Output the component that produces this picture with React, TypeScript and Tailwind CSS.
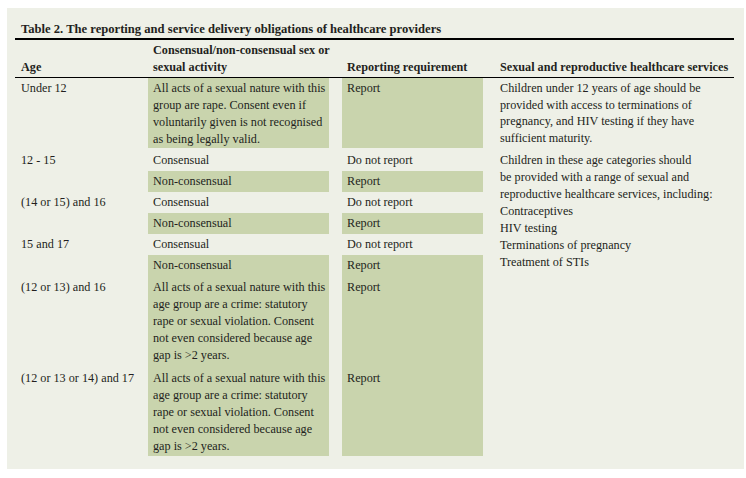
import React from 'react';

type Row = {
  age: string;
  activity: string[];
  report: string;
  green: boolean;
  multi?: boolean;
};

const CRIME = [
  'All acts of a sexual nature with this',
  'age group are a crime: statutory',
  'rape or sexual violation. Consent',
  'not even considered because age',
  'gap is >2 years.',
];

// rows after "Under 12"; the services column spans all of them
const rows: Row[] = [
  { age: '12 - 15', activity: ['Consensual'], report: 'Do not report', green: false },
  { age: '', activity: ['Non-consensual'], report: 'Report', green: true },
  { age: '(14 or 15) and 16', activity: ['Consensual'], report: 'Do not report', green: false },
  { age: '', activity: ['Non-consensual'], report: 'Report', green: true },
  { age: '15 and 17', activity: ['Consensual'], report: 'Do not report', green: false },
  { age: '', activity: ['Non-consensual'], report: 'Report', green: true },
  { age: '(12 or 13) and 16', activity: CRIME, report: 'Report', green: true, multi: true },
  { age: '(12 or 13 or 14) and 17', activity: CRIME, report: 'Report', green: true, multi: true },
];

const SERVICES = [
  'Children in these age categories should',
  'be provided with a range of sexual and',
  'reproductive healthcare services, including:',
  'Contraceptives',
  'HIV testing',
  'Terminations of pregnancy',
  'Treatment of STIs',
];

function Lines({ lines }: { lines: string[] }) {
  return (
    <>
      {lines.map((l) => (
        <div key={l} className="whitespace-nowrap">
          {l}
        </div>
      ))}
    </>
  );
}

export default function App() {
  return (
    <div
      className="w-[746px] h-[478px] bg-white pt-[8px] pl-[7px] text-[#231f20]"
      style={{ fontFamily: '"Liberation Serif", "Times New Roman", serif' }}
    >
      <div className="w-[737px] h-[461px] bg-[#eef0e7] pl-[8px] pr-[10px]">
        {/* Title */}
        <div className="pt-[13px] pl-[6px] text-[12.6px] leading-[17px] font-bold whitespace-nowrap">
          Table 2. The reporting and service delivery obligations of healthcare providers
        </div>
        <div className="h-[2px] bg-black" />

        <div className="grid grid-cols-[133px_181px_154px_1fr] text-[12.2px] leading-[17px]">
          {/* Header */}
          <div className="flex items-end pl-[6px] pt-[2px] pb-[1px] font-bold">Age</div>
          <div className="flex flex-col justify-end pl-[5px] pt-[2px] pb-[1px] font-bold whitespace-nowrap">
            <div>Consensual/non-consensual sex or</div>
            <div>sexual activity</div>
          </div>
          <div className="flex items-end ml-[13px] pl-[5px] pt-[2px] pb-[1px] font-bold whitespace-nowrap">
            Reporting requirement
          </div>
          <div className="flex items-end pl-[17px] pt-[2px] pb-[1px] font-bold whitespace-nowrap">
            Sexual and reproductive healthcare services
          </div>
          <div className="col-span-4 h-px bg-black" />

          {/* Under 12 */}
          <div className="pl-[6px] pt-[2px] pb-[1px]">Under 12</div>
          <div className="bg-[#c9d4ad] pl-[5px] pt-[2px] pb-[1px] h-[70px]">
            <Lines
              lines={[
                'All acts of a sexual nature with this',
                'group are rape. Consent even if',
                'voluntarily given is not recognised',
                'as being legally valid.',
              ]}
            />
          </div>
          <div className="bg-[#c9d4ad] ml-[13px] pl-[5px] pt-[2px] h-[70px]">Report</div>
          <div className="pl-[17px] pt-[2px] leading-[16.7px]">
            <Lines
              lines={[
                'Children under 12 years of age should be',
                'provided with access to terminations of',
                'pregnancy, and HIV testing if they have',
                'sufficient maturity.',
              ]}
            />
          </div>
          <div className="col-span-4 h-[2px]" />

          {rows.map((r, i) => {
            const pad = r.multi ? (i === rows.length - 1 ? 'pt-[3px] pb-[1px]' : 'pt-[3px] pb-[3px]') : 'py-[2px]';
            const bg = r.green ? 'bg-[#c9d4ad]' : '';
            return (
              <React.Fragment key={i}>
                <div className={`pl-[6px] whitespace-nowrap ${pad}`}>{r.age}</div>
                <div className={`pl-[5px] ${pad} ${bg}`}>
                  <Lines lines={r.activity} />
                </div>
                <div className={`ml-[13px] pl-[5px] ${pad} ${bg}`}>{r.report}</div>
                {i === 0 && (
                  <div className="row-span-8 pl-[17px] py-[2px]">
                    <Lines lines={SERVICES} />
                  </div>
                )}
              </React.Fragment>
            );
          })}
        </div>
      </div>
    </div>
  );
}
